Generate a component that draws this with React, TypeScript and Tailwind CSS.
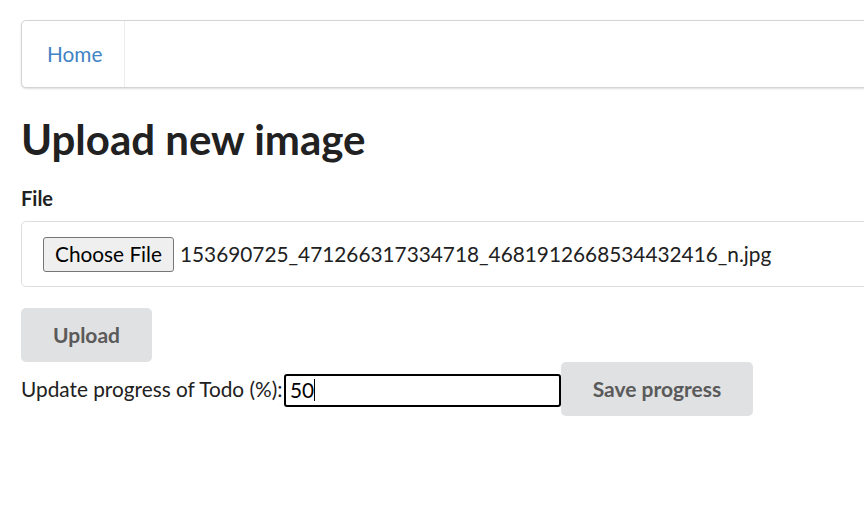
import React from 'react'

export default function App() {
  return (
    <div
      className="w-[864px] h-[511px] overflow-hidden bg-white text-[#212121]"
      style={{ fontFamily: 'Lato, "Helvetica Neue", Arial, sans-serif' }}
    >
      <div className="ml-[21px] w-[1000px] pt-[20px]">
        {/* Menu */}
        <div className="flex h-[68px] rounded-[5px] border border-[#d4d4d5] shadow-[0_1px_2px_0_rgba(34,36,38,0.15)] bg-white">
          <a className="flex items-center pl-[25px] pr-[22px] text-[20.8px] text-[#4183c4] border-r border-[#ececec]">
            Home
          </a>
        </div>

        <h1 className="mt-[26px] h-[50px] text-[42px] font-bold leading-[50px] text-[#212121]">
          Upload new image
        </h1>

        <form className="mt-[22px]">
          <label className="block h-[24px] text-[20px] font-bold leading-[24px] mb-[11px]">File</label>
          <div className="flex items-center h-[66px] rounded-[5px] border border-[#dedede] pl-[21px] text-[20.8px]">
            <span className="flex items-center h-[35px] px-[11px] rounded-[3px] border border-[#767676] bg-[#efefef] text-black">
              Choose File
            </span>
            <span className="ml-[6px] text-[#212121]">
              153690725_471266317334718_4681912668534432416_n.jpg
            </span>
          </div>

          <button
            type="button"
            className="mt-[21px] w-[131px] h-[54px] rounded-[5px] bg-[#e0e1e2] text-[21px] font-bold text-[#5a5a5a]"
          >
            Upload
          </button>
        </form>

        <div className="flex items-center">
          <span className="w-[263px] shrink-0 text-[20.8px] text-[#212121]">Update progress of Todo (%):</span>
          <div className="flex items-center w-[277px] h-[33px] mt-[2px] rounded-[3px] border-2 border-black pl-[4px] text-[20.8px] text-black">
            50
            <span className="w-px h-[22px] bg-black" />
          </div>
          <button
            type="button"
            className="w-[192px] h-[54px] rounded-[5px] bg-[#e0e1e2] text-[21px] font-bold text-[#5a5a5a]"
          >
            Save progress
          </button>
        </div>
      </div>
    </div>
  )
}
